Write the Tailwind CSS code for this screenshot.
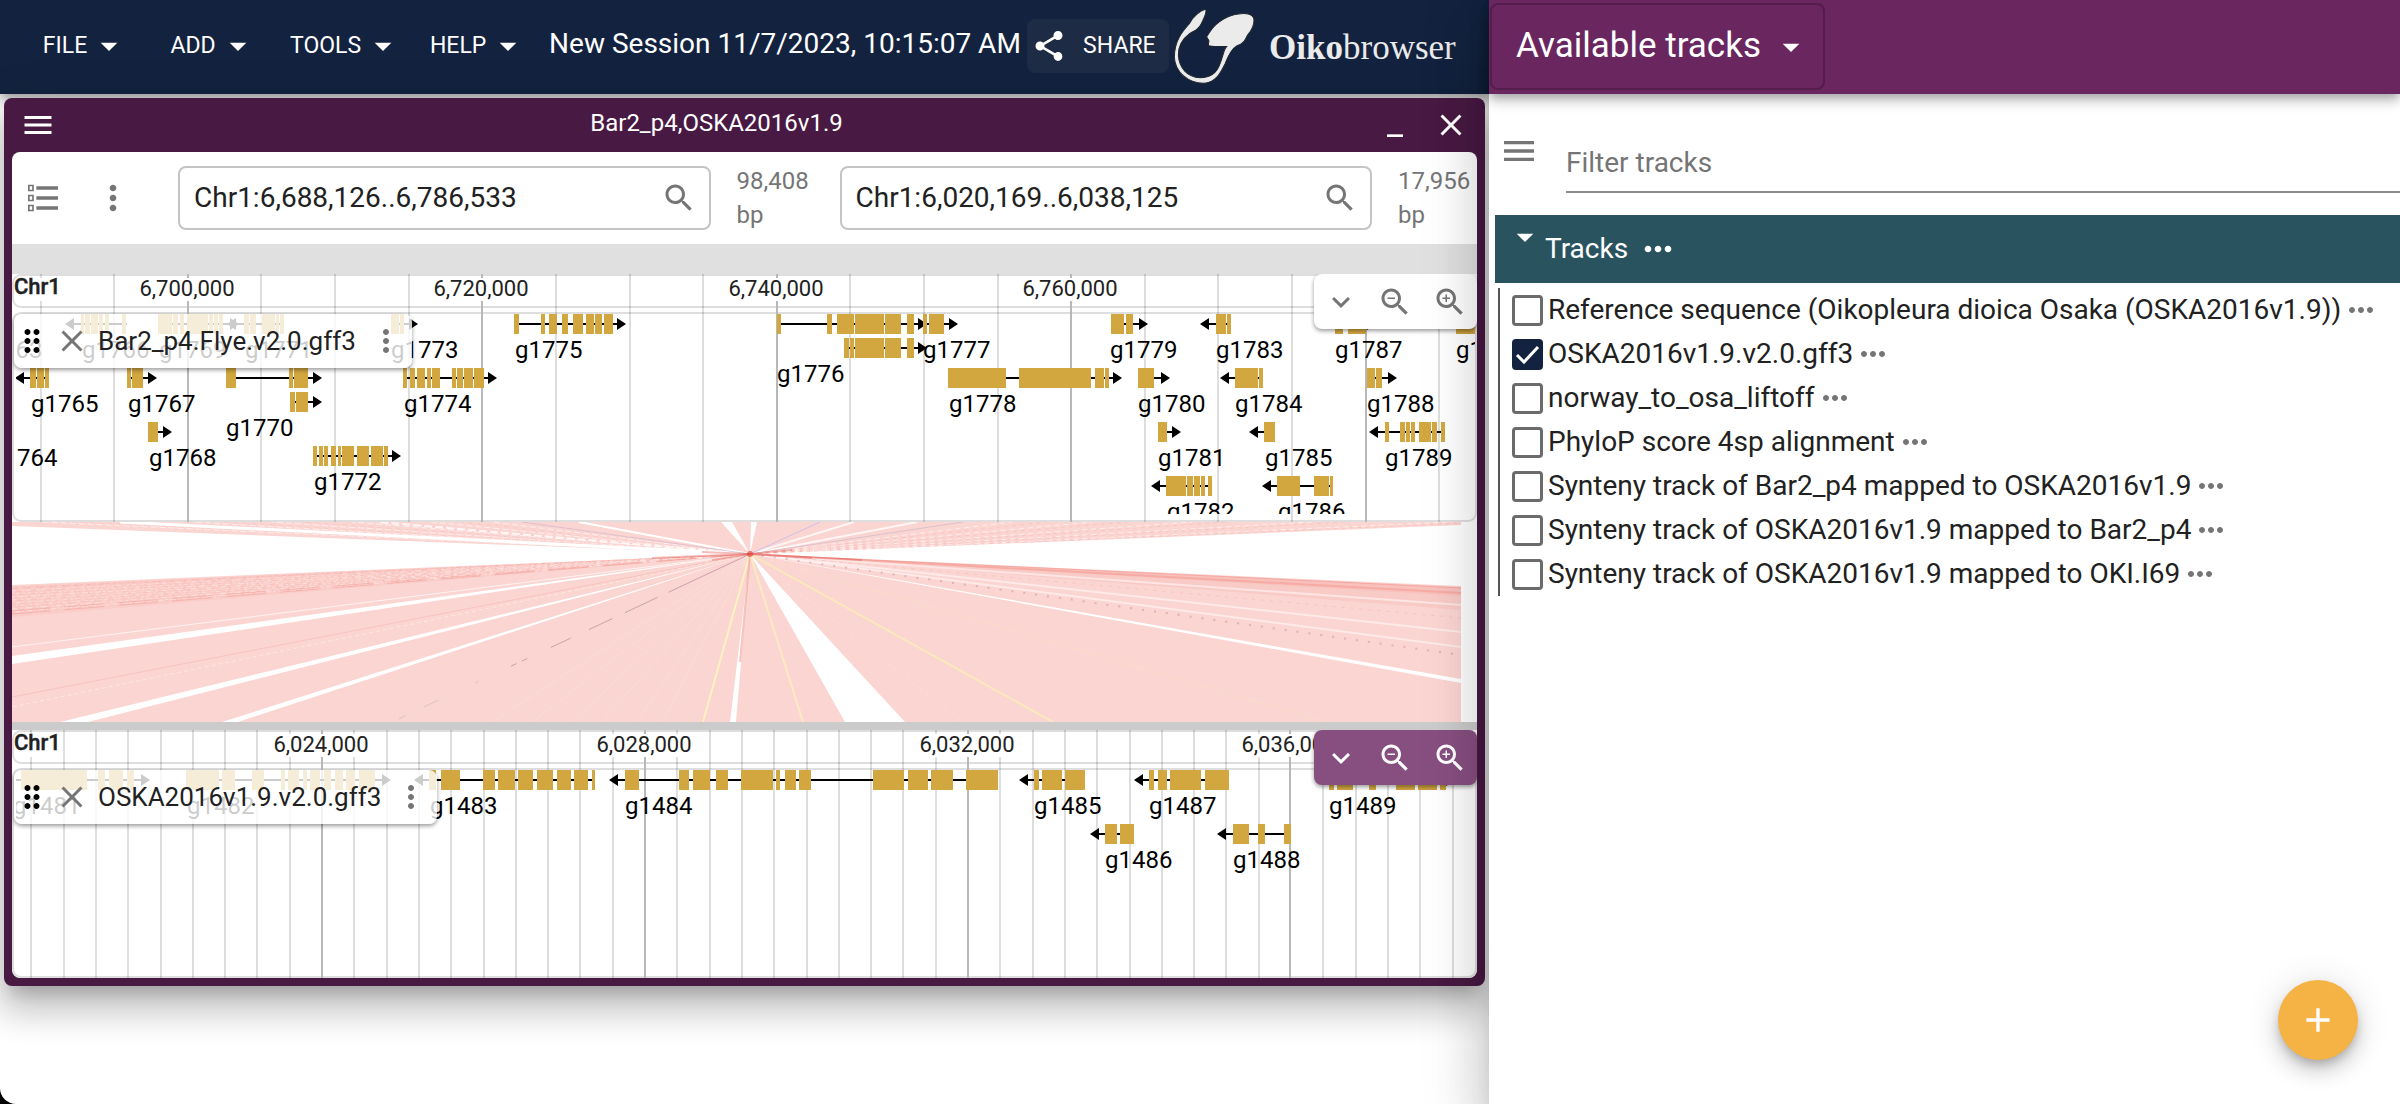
<!DOCTYPE html>
<html lang="en">
<head>
<meta charset="utf-8">
<title>Oikobrowser</title>
<script src="https://cdn.jsdelivr.net/npm/@tailwindcss/browser@4"></script>
</head>
<body class="bg-black font-['Roboto',sans-serif] text-[#212121]">
<svg class="hidden" aria-hidden="true">
  <symbol id="caret" viewBox="0 0 24 24"><path d="M7 10l5 5 5-5z"/></symbol>
  <symbol id="menu" viewBox="0 0 24 24"><path d="M3 18h18v-2H3v2zm0-5h18v-2H3v2zm0-7v2h18V6H3z"/></symbol>
  <symbol id="close" viewBox="0 0 24 24"><path d="M19 6.41L17.59 5 12 10.59 6.41 5 5 6.41 10.59 12 5 17.59 6.41 19 12 13.41 17.59 19 19 17.59 13.41 12z"/></symbol>
  <symbol id="minimize" viewBox="0 0 24 24"><path d="M6 19h12v2H6z"/></symbol>
  <symbol id="share" viewBox="0 0 24 24"><path d="M18 16.08c-.76 0-1.44.3-1.96.77L8.91 12.7c.05-.23.09-.46.09-.7s-.04-.47-.09-.7l7.05-4.11c.54.5 1.25.81 2.04.81 1.66 0 3-1.34 3-3s-1.34-3-3-3-3 1.34-3 3c0 .24.04.47.09.7L8.04 9.81C7.5 9.31 6.79 9 6 9c-1.66 0-3 1.34-3 3s1.34 3 3 3c.79 0 1.5-.31 2.04-.81l7.12 4.16c-.05.21-.08.43-.08.65 0 1.61 1.31 2.92 2.92 2.92s2.92-1.31 2.92-2.92-1.31-2.92-2.92-2.92z"/></symbol>
  <symbol id="list" viewBox="0 0 24 24"><path d="M8 7h13v-2H8zM8 13h13v-2H8zM8 19h13v-2H8z"/><path d="M3.500 4.500h2.500v3h-2.500zM3.500 10.500h2.500v3h-2.500zM3.500 16.500h2.500v3h-2.500z" fill="none" stroke="currentColor"/></symbol>
  <symbol id="kebab" viewBox="0 0 24 24"><path d="M12 8c1.100 0 2-.9 2-2s-.9-2-2-2-2 .9-2 2 .9 2 2 2zm0 2c-1.100 0-2 .9-2 2s.9 2 2 2 2-.9 2-2-.9-2-2-2zm0 6c-1.100 0-2 .9-2 2s.9 2 2 2 2-.9 2-2-.9-2-2-2z"/></symbol>
  <symbol id="dots" viewBox="0 0 24 24"><path d="M6 10c-1.100 0-2 .9-2 2s.9 2 2 2 2-.9 2-2-.9-2-2-2zm12 0c-1.100 0-2 .9-2 2s.9 2 2 2 2-.9 2-2-.9-2-2-2zm-6 0c-1.100 0-2 .9-2 2s.9 2 2 2 2-.9 2-2-.9-2-2-2z"/></symbol>
  <symbol id="search" viewBox="0 0 24 24"><path d="M15.500 14h-.79l-.28-.27C15.410 12.590 16 11.110 16 9.500 16 5.910 13.090 3 9.500 3S3 5.910 3 9.500 5.910 16 9.500 16c1.610 0 3.090-.59 4.230-1.570l.27.28v.79l5 4.990L20.490 19l-4.990-5zm-6 0C7.010 14 5 11.990 5 9.500S7.010 5 9.500 5 14 7.010 14 9.500 11.990 14 9.500 14z"/></symbol>
  <symbol id="zoomout" viewBox="0 0 24 24"><use href="#search"/><path d="M7 9h5v1H7z"/></symbol>
  <symbol id="zoomin" viewBox="0 0 24 24"><use href="#search"/><path d="M7 9h5v1H7zM9 7h1v5H9z"/></symbol>
  <symbol id="chevron" viewBox="0 0 24 24"><path d="M16.590 8.590L12 13.170 7.410 8.590 6 10l6 6 6-6z"/></symbol>
  <symbol id="drag" viewBox="0 0 24 24"><path d="M11 18c0 1.100-.9 2-2 2s-2-.9-2-2 .9-2 2-2 2 .9 2 2zm-2-8c-1.100 0-2 .9-2 2s.9 2 2 2 2-.9 2-2-.9-2-2-2zm0-6c-1.100 0-2 .9-2 2s.9 2 2 2 2-.9 2-2-.9-2-2-2zm6 4c1.100 0 2-.9 2-2s-.9-2-2-2-2 .9-2 2 .9 2 2 2zm0 2c-1.100 0-2 .9-2 2s.9 2 2 2 2-.9 2-2-.9-2-2-2zm0 6c-1.100 0-2 .9-2 2s.9 2 2 2 2-.9 2-2-.9-2-2-2z"/></symbol>
  <symbol id="plus" viewBox="0 0 24 24"><path d="M19 13h-6v6h-2v-6H5v-2h6V5h2v6h6v2z"/></symbol>
</svg>

<div class="grid min-h-screen grid-cols-[1489fr_911fr] overflow-hidden rounded-bl-2xl bg-white">
  <!-- Main pane -->
  <div class="min-w-0">
    <header class="flex h-[94px] items-center bg-[#13233f] pb-0.5 pl-5 text-white shadow-[0_4px_8px_-2px_rgba(0,0,0,0.2),0_8px_10px_0_rgba(0,0,0,0.14),0_2px_20px_0_rgba(0,0,0,0.12)]">
      <nav class="flex text-[23px]">
        <button class="flex min-w-32 items-center justify-center gap-0.5 px-3.5">FILE<svg class="-mr-1 size-10 fill-current"><use href="#caret"/></svg></button>
        <button class="flex min-w-32 items-center justify-center gap-0.5 px-3.5">ADD<svg class="-mr-1 size-10 fill-current"><use href="#caret"/></svg></button>
        <button class="flex min-w-32 items-center justify-center gap-0.5 px-3.5">TOOLS<svg class="-mr-1 size-10 fill-current"><use href="#caret"/></svg></button>
        <button class="flex min-w-32 items-center justify-center gap-0.5 px-3.5">HELP<svg class="-mr-1 size-10 fill-current"><use href="#caret"/></svg></button>
      </nav>
      <input aria-label="Session name" value="New Session 11/7/2023, 10:15:07 AM" class="ml-2 w-[478px] min-w-0 bg-transparent pb-1 text-[28px] leading-8">
      <button class="flex h-[54px] w-[142px] shrink-0 items-center gap-4 rounded-lg bg-[#1d2b45] pl-1 text-[23px]"><svg class="size-9 fill-current"><use href="#share"/></svg>SHARE</button>
      <a href="#" class="flex shrink-0 items-center gap-3 pl-1 font-['Liberation_Serif',serif] text-[35px] text-[#ebebeb]">
        <svg class="h-20 w-[84px]" viewBox="30 20 250 235"><path fill="#ebebeb" stroke="#20262e" stroke-width="3" d="M126 28C112 32 88 50 78 72C58 94 35 120 34 170C36 215 75 250 125 248C160 244 172 215 185 190C195 165 205 145 220 137C240 130 245 120 252 105C265 90 272 75 271 58C268 42 245 38 225 42C195 45 160 65 142 92L130 110L137 122L135 136C150 142 175 138 190 139C180 150 180 165 170 190C160 220 140 232 110 232C75 230 48 205 46 165C45 135 60 115 80 100C100 90 108 85 115 70C122 55 130 40 128 30Z"/></svg>
        <span class="pt-1"><b>Oiko</b>browser</span>
      </a>
    </header>

    <!-- Synteny view window -->
    <section class="mx-1 mt-1 rounded-lg bg-[#481943] px-2 pb-2 shadow-[0_14px_16px_-8px_rgba(0,0,0,0.2),0_24px_34px_4px_rgba(0,0,0,0.14),0_10px_44px_8px_rgba(0,0,0,0.12)]">
      <div class="flex h-[54px] items-center text-white">
        <button aria-label="View menu" class="ml-2 size-9"><svg class="size-9 fill-current"><use href="#menu"/></svg></button>
        <h2 class="flex-1 pb-1 text-center text-[24px]">Bar2_p4,OSKA2016v1.9</h2>
        <button aria-label="Minimize" class="mr-5 size-9 p-0.5"><svg class="size-8 fill-current"><use href="#minimize"/></svg></button>
        <button aria-label="Close" class="mr-2 size-9"><svg class="size-9 fill-current"><use href="#close"/></svg></button>
      </div>
      <div class="overflow-hidden rounded-lg bg-white">
        <div class="flex h-[92px] items-center text-[#757575]">
          <button aria-label="Open track selector" class="flex w-[62px] justify-center"><svg class="size-10 fill-current"><use href="#list"/></svg></button>
          <button aria-label="More options" class="mr-[26px] flex w-[78px] justify-center"><svg class="size-10 fill-current"><use href="#kebab"/></svg></button>
          <label class="flex h-16 min-w-0 flex-1 items-center rounded-lg border-2 border-[#c4c4c4] pl-3.5 pr-3"><input aria-label="First location" value="Chr1:6,688,126..6,786,533" class="min-w-0 flex-1 text-[28px] text-[#212121]"><svg class="size-9 fill-current"><use href="#search"/></svg></label>
          <p class="mx-[26px] w-[77px] text-[24px] leading-[34px]">98,408 bp</p>
          <label class="flex h-16 min-w-0 flex-1 items-center rounded-lg border-2 border-[#c4c4c4] pl-3.5 pr-3"><input aria-label="Second location" value="Chr1:6,020,169..6,038,125" class="min-w-0 flex-1 text-[28px] text-[#212121]"><svg class="size-9 fill-current"><use href="#search"/></svg></label>
          <p class="ml-[26px] mr-0.5 w-[77px] text-[24px] leading-[34px]">17,956 bp</p>
        </div>
        <div class="h-[30px] bg-[#e0e0e0]"></div>

        <div class="relative h-[248px] overflow-hidden">
          <svg id="top-track" width="1465" height="248" viewBox="12 0 1465 248"></svg>
          <div class="absolute left-0.5 top-10 flex h-[54px] w-[398px] items-center rounded-lg bg-white/80 shadow-[0_2px_4px_rgba(0,0,0,0.4)]">
            <svg class="size-9 fill-black"><use href="#drag"/></svg>
            <button aria-label="Close track" class="ml-1 text-[#757575]"><svg class="block size-9 fill-current"><use href="#close"/></svg></button>
            <span class="flex-1 pl-2 text-[26px] leading-8">Bar2_p4.Flye.v2.0.gff3</span>
            <button aria-label="Track menu" class="mr-2 text-[#757575]"><svg class="block size-9 fill-current"><use href="#kebab"/></svg></button>
          </div>
          <div class="absolute right-0 top-0 flex h-[55px] w-[163px] items-center justify-around rounded-lg bg-white text-[#757575] shadow-[0_2px_4px_rgba(0,0,0,0.4)]">
            <button aria-label="Show overview"><svg class="block size-9 fill-current"><use href="#chevron"/></svg></button>
            <button aria-label="Zoom out"><svg class="block size-9 fill-current"><use href="#zoomout"/></svg></button>
            <button aria-label="Zoom in"><svg class="block size-9 fill-current"><use href="#zoomin"/></svg></button>
          </div>
        </div>

        <div class="h-[200px] pr-4"><svg id="synteny" class="h-full w-full" viewBox="0 0 1449 200" preserveAspectRatio="none"></svg></div>
        <div class="h-2 bg-[#cbcbcb]"></div>

        <div class="relative h-[248px] overflow-hidden">
          <svg id="bottom-track" width="1465" height="248" viewBox="12 0 1465 248"></svg>
          <div class="absolute left-0.5 top-10 flex h-[54px] w-[423px] items-center rounded-lg bg-white/80 shadow-[0_2px_4px_rgba(0,0,0,0.4)]">
            <svg class="size-9 fill-black"><use href="#drag"/></svg>
            <button aria-label="Close track" class="ml-1 text-[#757575]"><svg class="block size-9 fill-current"><use href="#close"/></svg></button>
            <span class="flex-1 pl-2 text-[26px] leading-8">OSKA2016v1.9.v2.0.gff3</span>
            <button aria-label="Track menu" class="mr-2 text-[#757575]"><svg class="block size-9 fill-current"><use href="#kebab"/></svg></button>
          </div>
          <div class="absolute right-0 top-0 flex h-[55px] w-[163px] items-center justify-around rounded-lg bg-[#874f80] text-white shadow-[0_2px_4px_rgba(0,0,0,0.4)]">
            <button aria-label="Show overview"><svg class="block size-9 fill-current"><use href="#chevron"/></svg></button>
            <button aria-label="Zoom out"><svg class="block size-9 fill-current"><use href="#zoomout"/></svg></button>
            <button aria-label="Zoom in"><svg class="block size-9 fill-current"><use href="#zoomin"/></svg></button>
          </div>
        </div>
      </div>
    </section>
  </div>

  <!-- Track selector drawer -->
  <aside class="relative min-w-0 bg-white shadow-[0_16px_20px_-10px_rgba(0,0,0,0.2),0_32px_48px_4px_rgba(0,0,0,0.14),0_12px_60px_10px_rgba(0,0,0,0.12)]">
    <header class="flex h-[94px] items-start bg-[#69265f] pl-px pt-[3px] text-white shadow-[0_4px_8px_-2px_rgba(0,0,0,0.2),0_8px_10px_0_rgba(0,0,0,0.14),0_2px_20px_0_rgba(0,0,0,0.12)]">
      <button class="flex h-[87px] w-[335px] items-center justify-between rounded-lg border-2 border-[#541d4c] pl-6 pr-3 text-[35px]">Available tracks<svg class="size-10 fill-current"><use href="#caret"/></svg></button>
    </header>
    <div class="flex pt-9">
      <button aria-label="Track selector menu" class="ml-2.5 mt-px h-10 w-10 text-[#757575]"><svg class="size-10 fill-current"><use href="#menu"/></svg></button>
      <input aria-label="Filter tracks" placeholder="Filter tracks" class="ml-[27px] h-[63px] min-w-0 flex-1 border-b-2 border-[#8c8c8c] pt-1 text-[28px] placeholder:text-[#757575]">
    </div>
    <div class="ml-1.5 mt-[22px] flex h-[68px] items-center bg-[#29545f] pl-2.5 text-[28px] text-white">
      <svg class="size-10 -translate-y-3 fill-current"><use href="#caret"/></svg>Tracks
      <button aria-label="Category menu" class="ml-2.5"><svg class="block size-10 fill-current"><use href="#dots"/></svg></button>
    </div>
    <ul id="tracks" class="ml-[9px] mt-[5px] border-l-2 border-[#555] pl-3 text-[28px]"></ul>
    <button aria-label="Add track" class="absolute bottom-11 right-[42px] flex size-20 items-center justify-center rounded-full bg-[#f4b344] text-white shadow-[0_6px_10px_-2px_rgba(0,0,0,0.2),0_12px_20px_0_rgba(0,0,0,0.14),0_2px_36px_0_rgba(0,0,0,0.12)]"><svg class="size-10 fill-current"><use href="#plus"/></svg></button>
  </aside>
</div>

<script>
const tracks = [
  ['Reference sequence (Oikopleura dioica Osaka (OSKA2016v1.9))', false],
  ['OSKA2016v1.9.v2.0.gff3', true],
  ['norway_to_osa_liftoff', false],
  ['PhyloP score 4sp alignment', false],
  ['Synteny track of Bar2_p4 mapped to OSKA2016v1.9', false],
  ['Synteny track of OSKA2016v1.9 mapped to Bar2_p4', false],
  ['Synteny track of OSKA2016v1.9 mapped to OKI.I69', false],
];
document.getElementById('tracks').innerHTML = tracks.map(([name, on], i) => `
  <li class="flex h-11 items-center">
    <span class="relative mr-[5px] flex">
      <input type="checkbox" id="t${i}" ${on ? 'checked' : ''} class="peer size-[31px] appearance-none rounded-sm border-3 border-[#6b6b6b] checked:border-[#13233f] checked:bg-[#13233f]">
      <svg class="pointer-events-none absolute inset-0 hidden size-[31px] fill-none stroke-white stroke-3 peer-checked:block" viewBox="0 0 31 31"><path d="M5 16l7 7L26 8"/></svg>
    </span>
    <label for="t${i}" class="whitespace-nowrap">${name}</label>
    <button aria-label="Track menu" class="ml-0.5 text-[#757575]"><svg class="block size-9 fill-current"><use href="#dots"/></svg></button>
  </li>`).join('');

// Gene: [name, label x, label baseline, [[row y, line start, line end, arrow tip, exons]...]]
const topGenes = [
  ['g1763', -25, 84, []],
  ['g1766', 82, 84, [[40, 74, 127, 65, '81-84 85-90 91-98 99-103 105-109 122-126']]],
  ['g1769', 159, 84, [[40, 158, 230, 239, '158-172 173-178 180-184 187-208 209-213 214-218 219-223']]],
  ['g1771', 245, 84, [[40, 236, 284, 227, '244-249 250-256 262-275 276-279 280-284']]],
  ['g1773', 391, 84, [[40, 391, 410, 418, '391-399 400-404']]],
  ['g1775', 515, 84, [[40, 515, 618, 626, '514-519 541-545 549-557 562-568 573-583 586-594 595-602 604-613']]],
  ['g1776', 777, 108, [[40, 777, 918, 927, '777-781 827-832 837-854 855-884 885-901 907-914'], [64, 844, 918, 927, '844-849 850-854 855-884 885-901 907-914']]],
  ['g1777', 923, 84, [[40, 923, 950, 958, '923-927 929-944']]],
  ['g1779', 1110, 84, [[40, 1111, 1140, 1148, '1111-1124 1126-1133']]],
  ['g1783', 1216, 84, [[40, 1208, 1231, 1200, '1216-1226 1227-1231']]],
  ['g1787', 1335, 84, [[40, 1335, 1366, 1376, '1335-1343 1348-1366']]],
  ['g1790', 1456, 84, [[40, 1456, 1476, 1490, '1456-1475']]],
  ['g1765', 31, 138, [[94, 23, 49, 15, '30-36 37-44 45-49']]],
  ['g1767', 128, 138, [[94, 128, 149, 157, '127-131 132-143']]],
  ['g1770', 226, 162, [[94, 226, 314, 322, '226-236 289-293 294-308'], [118, 290, 314, 322, '290-295 296-308']]],
  ['g1774', 404, 138, [[94, 404, 488, 497, '403-407 410-415 417-425 427-431 432-440 452-456 457-463 464-473 474-484']]],
  ['g1778', 949, 138, [[94, 949, 1113, 1122, '948-1006 1019-1091 1095-1104 1105-1109']]],
  ['g1780', 1138, 138, [[94, 1139, 1162, 1170, '1138-1154']]],
  ['g1784', 1235, 138, [[94, 1229, 1263, 1220, '1235-1258 1259-1263']]],
  ['g1788', 1367, 138, [[94, 1367, 1389, 1397, '1367-1375 1376-1382']]],
  ['g1764', -10, 192, []],
  ['g1768', 149, 192, [[148, 148, 163, 172, '148-150 150-158']]],
  ['g1781', 1158, 192, [[148, 1159, 1173, 1181, '1158-1163 1163-1167']]],
  ['g1785', 1265, 192, [[148, 1258, 1275, 1249, '1264-1275']]],
  ['g1789', 1385, 192, [[148, 1378, 1445, 1369, '1385-1389 1400-1405 1406-1410 1411-1415 1419-1431 1432-1437 1441-1445']]],
  ['g1772', 314, 216, [[172, 314, 393, 401, '313-317 319-323 324-328 331-336 338-341 342-354 357-369 371-383 384-388']]],
  ['g1782', 1167, 246, [[202, 1160, 1212, 1151, '1166-1186 1187-1193 1194-1200 1201-1205 1208-1212']]],
  ['g1786', 1278, 246, [[202, 1271, 1333, 1262, '1277-1300 1314-1329 1330-1333']]],
];
const bottomGenes = [
  ['g1481', 13, 84, [[40, 14, 142, 150, '14-15 21-87 98-105 109-123 127-134']]],
  ['g1482', 187, 84, [[40, 187, 383, 391, '186-219 222-235 252-264 281-285 288-299 303-307 310-320 324-331 335-343 346-355 359-375']]],
  ['g1483', 430, 84, [[40, 422, 594, 414, '429-436 441-460 483-495 498-515 518-533 537-553 557-571 574-588 592-595']]],
  ['g1484', 625, 84, [[40, 617, 998, 609, '625-639 679-689 693-710 716-728 741-773 776-780 785-796 799-811 873-904 908-928 931-953 966-998']]],
  ['g1485', 1034, 84, [[40, 1027, 1085, 1019, '1034-1039 1042-1062 1065-1085']]],
  ['g1487', 1149, 84, [[40, 1142, 1229, 1134, '1149-1154 1158-1167 1170-1201 1205-1229']]],
  ['g1489', 1329, 84, [[40, 1329, 1450, 1455, '1329-1334 1337-1353 1369-1376 1396-1415 1418-1437 1440-1446']]],
  ['g1486', 1105, 138, [[94, 1098, 1134, 1090, '1105-1117 1120-1134']]],
  ['g1488', 1233, 138, [[94, 1225, 1291, 1217, '1233-1249 1258-1265 1284-1291']]],
];

function drawTrack(id, genes, lines, majors) {
  let s = `<defs><clipPath id="${id}-clip"><rect x="16" y="38" width="1459" height="202"/></clipPath></defs>`;
  for (const [top, height] of [[0, 34], [38, 210]])
    s += `<rect x="13" y="${top + 1}" width="1463" height="${height - 2}" rx="8" fill="none" stroke="#dedede" stroke-width="2"/>`;
  for (const x of lines) s += `<path d="M${x} 0V248" stroke="#000" stroke-opacity=".13" stroke-width="2"/>`;
  for (const [x, label] of majors) {
    s += `<path d="M${x} 0V248" stroke="#b8b8b8" stroke-width="2"/>`;
    if (label) s += `<rect x="${x - 50}" y="4" width="100" height="23" fill="#fff"/><text x="${x - 1}" y="22" font-size="22" text-anchor="middle" fill="#212121">${label}</text>`;
  }
  s += `<rect x="16" y="4" width="44" height="23" fill="#fff"/><text x="14" y="20" font-size="22" font-weight="500" fill="#212121" stroke="#212121" stroke-width=".4">Chr1</text><g clip-path="url(#${id}-clip)">`;
  for (const [name, lx, ly, parts] of genes) {
    for (const [y, x1, x2, tip, exons] of parts) {
      const c = y + 10, back = tip < x1 ? tip + 9 : tip - 9;
      s += `<path d="M${x1} ${c}H${x2}" stroke="#000" stroke-width="2"/><path d="M${tip} ${c}L${back} ${c - 6}V${c + 6}z"/>`;
      for (const e of exons.split(' ')) {
        const [a, b] = e.split('-').map(Number);
        s += `<rect x="${a}" y="${y}" width="${b - a}" height="20" fill="#d2a740"/>`;
      }
    }
    s += `<text x="${lx}" y="${ly}" font-size="24">${name}</text>`;
  }
  document.getElementById(id).innerHTML = s + '</g>';
}
drawTrack('top-track', topGenes, [41, 114, 261, 335, 409, 556, 630, 703, 850, 924, 998, 1145, 1218, 1292, 1439],
  [[188, '6,700,000'], [482, '6,720,000'], [777, '6,740,000'], [1071, '6,760,000'], [1366, '']]);
const minor = [];
for (let k = -9; k < 36; k++) if (k % 10) minor.push(Math.round(322 + 32.3 * k));
drawTrack('bottom-track', bottomGenes, minor, [[322, '6,024,000'], [645, '6,028,000'], [968, '6,032,000'], [1290, '6,036,000']]);

// Every alignment ribbon fans out from one point.
const F = '738 32';
const wedge = (x1, y1, x2, y2, fill, o = 1) => `<path d="M${F}L${x1} ${y1}L${x2} ${y2}z" fill="${fill}" fill-opacity="${o}"/>`;
const ray = (x, y, c, w = 1, o = 1, dash = '') => `<path d="M${F}L${x} ${y}" stroke="${c}" stroke-width="${w}" stroke-opacity="${o}" stroke-dasharray="${dash}"/>`;
let g = '<rect width="1449" height="200" fill="#fbd5d2"/>';
g += wedge(0, 4, 0, 63, '#fff') + wedge(1449, 3, 1449, 64, '#fff');
g += wedge(0, 64, 0, 95, '#f6b0a8', .22) + wedge(1449, 65, 1449, 74, '#f4877c', .25) + wedge(1449, 74, 1449, 88, '#f6a49c', .2);
for (let y = 66; y < 93; y += 3) g += ray(0, y, '#fff', 1, .4, `${3 + y % 4} ${3 + y % 3} 2 ${2 + y % 5}`) + ray(0, y + 1, '#f4948a', 1, .2, `${4 + y % 5} ${5 + y % 4}`);
for (const y of [89, 92]) g += ray(0, y, '#f2938b', 1, .45, '40 14');
for (const x of [30, 180, 260, 340, 420, 480]) g += ray(x, 0, '#fff', 1, .6, '6 3') + ray(x + 30, 0, '#f4948a', 1, .2, '4 5');
for (const x of [1000, 1080, 1180, 1300, 1440]) g += ray(x, 0, '#fff', 1, .6, '5 4') + ray(x + 35, 0, '#f4948a', 1, .25, '4 4');
g += ray(108, 0, '#fff', 3) + ray(366, 0, '#fff', 2, .8, '8 3') + ray(567, 0, '#fff', 2) + ray(842, 0, '#fff', 2, .8) + ray(905, 0, '#fff', 2, .8);
g += ray(808, 0, '#cdbfe4', 1) + ray(951, 0, '#dcc0cc', 1) + ray(510, 0, '#ccb8d0', 1, .6);
g += wedge(709, 0, 720, 0, '#fff') + wedge(739, 0, 745, 0, '#fff');
g += ray(0, 125, '#fff', 1, .7) + wedge(0, 134, 0, 142, '#fff') + wedge(48, 200, 76, 200, '#fff') + wedge(210, 200, 226, 200, '#fff');
g += ray(0, 175, '#f0a09a', 1, .35) + ray(0, 185, '#fff3e6', 1, .6, '4 3');
g += ray(380, 200, '#b48a9a', 1, .7, '90 12 36 14 26 20 22 26 6 6 6 1000') + ray(380, 200, '#c9b4c4', 1, .6, '0 300 4 40 16 20 8 1000');
g += ray(0, 66, '#e8463a', 1, .15) + ray(1449, 71, '#e8463a', 2, .18) + ray(1449, 66, '#e8463a', 1, .2);
for (const y of [83, 110, 125]) g += ray(1449, y, '#fff', 2, .5);
g += ray(1449, 133, '#b07078', 2, .35, '2 10') + wedge(1449, 157, 1449, 161, '#fff') + ray(1449, 96, '#f08a80', 1, .25, '3 6');
g += ray(691, 200, '#fdf3c0', 2) + wedge(718, 200, 724, 200, '#fff') + ray(728, 140, '#f08a80', 2, .5) + ray(791, 200, '#fbf0bd', 2, .8);
g += wedge(833, 200, 893, 200, '#fff') + ray(1041, 200, '#fbeeb8', 2, .8) + ray(1314, 200, '#fbe3c0', 1, .7, '4 3') + ray(950, 200, '#fbe6cf', 1, .7, '3 5');
for (const x of [480, 520, 560, 590, 625, 650]) g += ray(x, 200, '#f9e6dc', 1, .5);
g += `<circle cx="738" cy="32" r="3" fill="#e0463c" fill-opacity=".7"/>`;
for (const [x, y] of [[690, 30], [700, 38], [780, 28], [800, 36], [640, 36], [850, 38]]) g += ray(x, y, '#e0463c', 2, .35);
document.getElementById('synteny').innerHTML = g;
</script>
</body>
</html>
